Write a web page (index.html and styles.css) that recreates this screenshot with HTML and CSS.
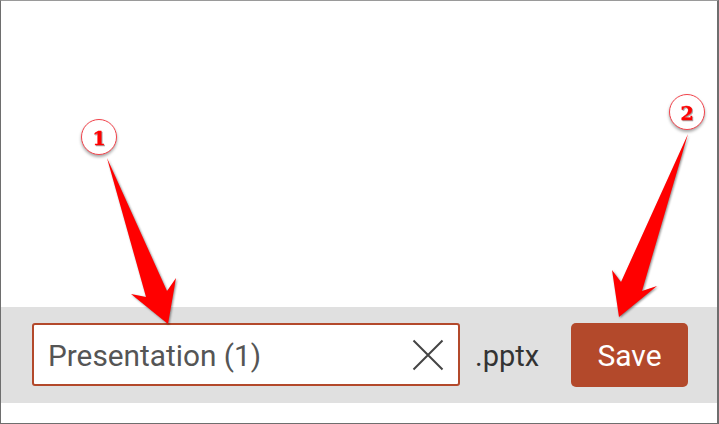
FILE: index.html
```html
<!DOCTYPE html>
<html lang="en">
<head>
<meta charset="utf-8">
<title>Save presentation</title>
<link rel="stylesheet" href="styles.css">
</head>
<body>
<div class="frame">
  <div class="canvas"></div>
  <div class="bar">
    <div class="field">
      <span class="name">Presentation (1)</span>
      <svg class="clear" width="32" height="32" viewBox="0 0 32 32"><path d="M1.500 1.500L30.500 30.500M30.500 1.500L1.500 30.500"/></svg>
    </div>
    <span class="ext">.pptx</span>
    <div class="save">Save</div>
  </div>
  <div class="foot"></div>
</div>
<svg class="notes" width="719" height="424" viewBox="0 0 719 424">
  <g class="mark">
    <path d="M107 158L146 297L131 294L168 324L176 278L167 291Z"/>
    <path d="M688 134L621 282L612 270L619 317L657 286L642 291Z"/>
  </g>
  <circle class="badge" cx="99" cy="137" r="17.500"/>
  <text class="num" x="99" y="144.500">1</text>
  <circle class="badge" cx="687" cy="112" r="17.500"/>
  <text class="num" x="687" y="119.500">2</text>
</svg>
</body>
</html>
```
FILE: styles.css
```css
html, body {
  margin: 0;
  padding: 0;
  background: #fff;
}
body {
  position: relative;
  width: 719px;
  height: 424px;
  overflow: hidden;
  font-family: Roboto, "Liberation Sans", sans-serif;
}
.frame {
  box-sizing: border-box;
  width: 719px;
  height: 424px;
  display: flex;
  flex-direction: column;
  border: 1px solid #6e6e6e;
  border-top-color: #9a9a9a;
  border-width: 1px 2px 1px 1px;
  background: #fff;
}
.canvas {
  flex: 1;
}
.bar {
  height: 96px;
  flex: none;
  display: flex;
  align-items: flex-start;
  box-sizing: border-box;
  padding: 16px 0 0 31px;
  background: #e0e0e0;
}
.foot {
  height: 20px;
  flex: none;
}
.field {
  box-sizing: border-box;
  width: 428px;
  height: 63px;
  display: flex;
  align-items: center;
  justify-content: space-between;
  padding: 1px 14px 0 14px;
  background: #fff;
  border: 2px solid #b3492b;
  border-radius: 3px;
}
.name {
  font-size: 29.800px;
  color: #555;
}
.clear path {
  fill: none;
  stroke: #444;
  stroke-width: 2;
}
.ext {
  width: 111px;
  box-sizing: border-box;
  padding-left: 15px;
  line-height: 66px;
  font-size: 29px;
  color: #333;
}
.save {
  width: 117px;
  height: 64px;
  display: flex;
  align-items: center;
  justify-content: center;
  font-size: 30px;
  color: #fff;
  background: #b3492b;
  border-radius: 5px;
}
.notes {
  position: absolute;
  left: 0;
  top: 0;
}
.mark {
  fill: #f00;
  filter: drop-shadow(1px 1px 1px rgba(0, 0, 0, .45));
}
.badge {
  fill: #fff;
  stroke: #f2434b;
  stroke-width: 1;
  filter: drop-shadow(0 2px 1.500px rgba(0, 0, 0, .35));
}
.num {
  font-family: "DejaVu Serif", serif;
  font-weight: 700;
  font-size: 19px;
  text-anchor: middle;
  fill: #f00;
  stroke: #f00;
  stroke-width: .4;
  filter: drop-shadow(1px 1px .5px rgba(0, 0, 0, .35));
}
```
